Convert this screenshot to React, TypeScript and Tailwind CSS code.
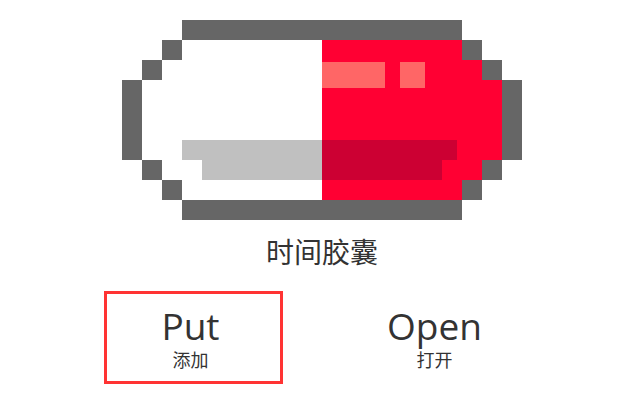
import React from "react";

const FONT = "font-['Open_Sans','Noto_Sans_CJK_SC',sans-serif]";

function Capsule() {
  return (
    <svg width="400" height="200" viewBox="0 0 400 200" shapeRendering="crispEdges" className="block">
      <path d="M60 20H200V180H60V160H40V140H20V60H40V40H60Z" fill="#ffffff" />
      <path d="M200 20H340V40H360V60H380V140H360V160H340V180H200Z" fill="#ff0033" />
      <path d="M200 42H263V68H200Z" fill="#ff6666" />
      <path d="M278 42H303V68H278Z" fill="#ff6666" />
      <path d="M60 120H200V160H80V140H60Z" fill="#c0c0c0" />
      <path d="M200 120H335V140H320V160H200Z" fill="#cc0033" />
      <g fill="#666666">
        <rect x="60" y="0" width="280" height="20" />
        <rect x="60" y="180" width="280" height="20" />
        <rect x="40" y="20" width="20" height="20" />
        <rect x="20" y="40" width="20" height="20" />
        <rect x="0" y="60" width="20" height="80" />
        <rect x="20" y="140" width="20" height="20" />
        <rect x="40" y="160" width="20" height="20" />
        <rect x="340" y="20" width="20" height="20" />
        <rect x="360" y="40" width="20" height="20" />
        <rect x="380" y="60" width="20" height="80" />
        <rect x="360" y="140" width="20" height="20" />
        <rect x="340" y="160" width="20" height="20" />
      </g>
    </svg>
  );
}

export default function App() {
  return (
    <div className={`${FONT} flex h-[400px] w-[626px] flex-col items-center overflow-hidden bg-white pt-5 text-[#333333]`}>
      <div className="ml-[18px] flex flex-col items-center">
        <Capsule />
        <h1 className="mt-[13px] text-[28px] font-normal leading-[38px]">时间胶囊</h1>
      </div>
      <div className="ml-[2px] mt-[20px] flex gap-[62px]">
        <button className="flex h-[93px] w-[179px] flex-col items-center border-[3px] border-[#ff3333] pr-[6px] pt-[10px]">
          <span className="text-[37px] leading-[44px]">Put</span>
          <span className="mt-px text-[18px] leading-[22px]">添加</span>
        </button>
        <button className="flex h-[93px] w-[179px] flex-col items-center border-[3px] border-transparent pt-[10px]">
          <span className="text-[37px] leading-[44px]">Open</span>
          <span className="mt-px text-[18px] leading-[22px]">打开</span>
        </button>
      </div>
    </div>
  );
}
